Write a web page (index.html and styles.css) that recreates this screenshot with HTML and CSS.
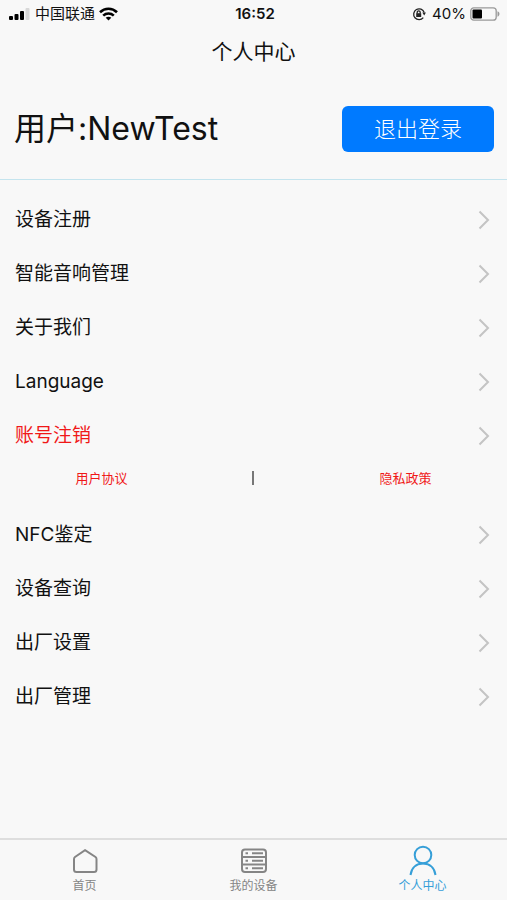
FILE: index.html
```html
<!DOCTYPE html>
<html lang="zh-CN">
<head>
<meta charset="utf-8">
<meta name="viewport" content="width=device-width, initial-scale=1">
<title>个人中心</title>
<link rel="stylesheet" href="styles.css">
</head>
<body>
<div class="status">
  <div class="status-left">
    <svg width="22" height="14" viewBox="0 0 22 14" aria-hidden="true">
      <rect x="0" y="9" width="4" height="4" rx="1"/><rect x="5.500" y="7" width="4" height="6" rx="1"/><rect x="11" y="4" width="4" height="9" rx="1"/><rect x="16.500" y="1" width="4" height="12" rx="1" fill="#d8d8d8"/>
    </svg>
    <span>中国联通</span>
    <svg width="19" height="14" viewBox="0 0 19 14" fill="none" stroke="#000" stroke-width="2.6" aria-hidden="true">
      <path d="M1 5.2C5.8.6 13.2.6 18 5.2M4.2 8.6c3-2.8 7.6-2.8 10.6 0"/><path d="M9.500 13.500 6.700 10.800c1.600-1.400 4-1.400 5.600 0z" fill="#000" stroke="none"/>
    </svg>
  </div>
  <time class="clock">16:52</time>
  <div class="status-right">
    <svg width="14" height="14" viewBox="0 0 14 14" fill="none" stroke="#222" stroke-width="1.300" aria-hidden="true">
      <path d="M11.300 10.600A5.400 5.400 0 1 1 12.200 5.500"/><path d="M10.300 5.600h3.600l-1.700 2.800z" fill="#222" stroke="none"/><rect x="4.200" y="6.200" width="5" height="3.800" fill="#222" stroke="none"/><path d="M5.200 6.500V5.300a1.500 1.500 0 0 1 3 0v1.200"/>
    </svg>
    <span class="percent">40%</span>
    <svg width="31" height="14" viewBox="0 0 31 14" aria-hidden="true">
      <rect x=".8" y=".8" width="25.400" height="12.400" rx="3" fill="none" stroke="#999" stroke-width="1.300"/><rect x="2.500" y="2.500" width="9.500" height="9" rx="1"/><path d="M27.500 4.300c2.600.8 2.600 4.600 0 5.400z" fill="#999"/>
    </svg>
  </div>
</div>
<header class="title"><h1>个人中心</h1></header>
<main>
  <section class="profile">
    <h2>用户:NewTest</h2>
    <button type="button" class="logout">退出登录</button>
  </section>
  <nav class="menu" aria-label="设置">
    <a class="row" href="#register">设备注册<svg class="chevron" viewBox="0 0 12 20"><path d="m1.500 1.500 8.500 8.500-8.500 8.500"/></svg></a>
    <a class="row" href="#speaker">智能音响管理<svg class="chevron" viewBox="0 0 12 20"><path d="m1.500 1.500 8.500 8.500-8.500 8.500"/></svg></a>
    <a class="row" href="#about">关于我们<svg class="chevron" viewBox="0 0 12 20"><path d="m1.500 1.500 8.500 8.500-8.500 8.500"/></svg></a>
    <a class="row" href="#language">Language<svg class="chevron" viewBox="0 0 12 20"><path d="m1.500 1.500 8.500 8.500-8.500 8.500"/></svg></a>
    <a class="row danger" href="#cancel">账号注销<svg class="chevron" viewBox="0 0 12 20"><path d="m1.500 1.500 8.500 8.500-8.500 8.500"/></svg></a>
    <div class="legal">
      <a href="#terms">用户协议</a>
      <span class="divider"></span>
      <a href="#privacy">隐私政策</a>
    </div>
    <a class="row" href="#nfc">NFC鉴定<svg class="chevron" viewBox="0 0 12 20"><path d="m1.500 1.500 8.500 8.500-8.500 8.500"/></svg></a>
    <a class="row" href="#query">设备查询<svg class="chevron" viewBox="0 0 12 20"><path d="m1.500 1.500 8.500 8.500-8.500 8.500"/></svg></a>
    <a class="row" href="#factory-settings">出厂设置<svg class="chevron" viewBox="0 0 12 20"><path d="m1.500 1.500 8.500 8.500-8.500 8.500"/></svg></a>
    <a class="row" href="#factory-admin">出厂管理<svg class="chevron" viewBox="0 0 12 20"><path d="m1.500 1.500 8.500 8.500-8.500 8.500"/></svg></a>
  </nav>
</main>
<nav class="tabs" aria-label="主导航">
  <a href="#home">
    <svg width="30" height="32" viewBox="0 0 30 32"><path d="M15 5.200 25.500 12Q26.500 12.800 26.500 14V24.500Q26.500 27 24 27H6.500Q4 27 4 24.500V14Q4 12.800 5 12Z"/></svg>
    <span>首页</span>
  </a>
  <a href="#devices">
    <svg width="30" height="32" viewBox="0 0 30 32"><rect x="3" y="4.500" width="24" height="22.500" rx="3"/><path d="M3 12h24M3 19.500h24"/><path d="M6.500 8.300h2.500M13 8.300h11M6.500 15.800h2.500M13 15.800h11M6.500 23.300h2.500M13 23.300h11"/></svg>
    <span>我的设备</span>
  </a>
  <a class="active" href="#me" aria-current="page">
    <svg width="30" height="32" viewBox="0 0 30 32"><circle cx="15" cy="10" r="8.300"/><path d="M2.500 30C3.500 22.500 8.500 18.500 15 18.500s11.500 4 12.500 11.500"/></svg>
    <span>个人中心</span>
  </a>
</nav>
</body>
</html>
```
FILE: styles.css
```css
* { box-sizing: border-box; }

body {
  margin: 0;
  min-height: 100vh;
  display: flex;
  flex-direction: column;
  background: #f8f8f8;
  color: #111;
  font-family: Inter, "Noto Sans CJK SC", sans-serif;
}

a { color: inherit; text-decoration: none; }
h1, h2 { margin: 0; font-weight: 400; }
svg { display: block; flex: none; }

.status {
  display: grid;
  grid-template-columns: 1fr auto 1fr;
  align-items: center;
  height: 28px;
  padding: 0 6px 0 9px;
  font-size: 15px;
  line-height: 20px;
}
.status-left, .status-right { display: flex; align-items: center; gap: 4px; }
.status-right { justify-content: flex-end; }
.status-right .percent { margin-left: 2px; }
.clock { font-weight: 600; }

.title {
  display: flex;
  align-items: center;
  justify-content: center;
  height: 48px;
}
.title h1 { font-size: 21px; line-height: 28px; }

main { flex: 1; }

.profile {
  display: flex;
  align-items: center;
  justify-content: space-between;
  height: 104px;
  padding: 2px 13px 0 14px;
  border-bottom: 1px solid #c4e4ee;
}
.profile h2 { font-size: 32px; line-height: 48px; }

.logout {
  width: 152px;
  height: 46px;
  padding: 0;
  border: 0;
  border-radius: 6px;
  background: #007aff;
  color: #fff;
  font: inherit;
  font-size: 22px;
  font-weight: 300;
  line-height: 44px;
}

.menu { padding-top: 13px; }
.row {
  display: flex;
  align-items: center;
  justify-content: space-between;
  height: 54px;
  padding: 0 17px 0 15px;
  font-size: 19px;
  line-height: 28px;
}
.danger, .legal { color: #f01818; }
.chevron {
  width: 12px;
  height: 20px;
  fill: none;
  stroke: #c4c4c4;
  stroke-width: 2;
}

.legal {
  display: grid;
  grid-template-columns: 2fr 1fr 2fr;
  align-items: center;
  justify-items: center;
  height: 30px;
  margin-bottom: 15px;
  font-size: 13px;
  line-height: 20px;
}
.divider { width: 2px; height: 14px; background: #777; }

.tabs {
  display: grid;
  grid-template-columns: repeat(3, 1fr);
  height: 62px;
  padding-top: 5px;
  border-top: 2px solid #dedede;
  color: #858585;
  font-size: 12px;
  line-height: 18px;
}
.tabs a { display: flex; flex-direction: column; align-items: center; }
.tabs svg { fill: none; stroke: currentColor; stroke-width: 2; }
.tabs .active { color: #369fd8; }
```
